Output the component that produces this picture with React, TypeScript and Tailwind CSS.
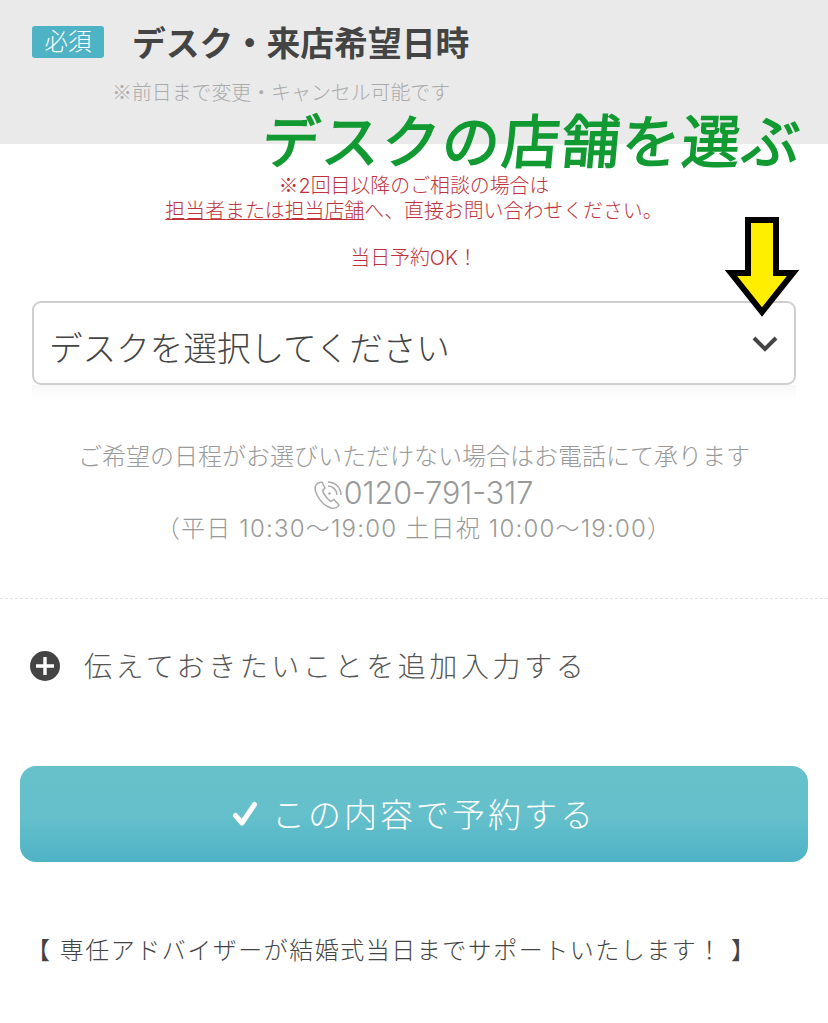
import React from "react";

const JP = 'Inter, "Noto Sans CJK JP", "Noto Sans", sans-serif';
const CJK = '"Noto Sans CJK JP", "Noto Sans", sans-serif';

export default function App() {
  return (
    <div className="relative w-[828px] h-[1023px] overflow-hidden bg-white" style={{ fontFamily: JP }}>
      {/* header */}
      <div className="h-[144px] bg-[#eaeaea] pl-[32px] pt-[26px]">
        <div className="flex items-center h-[32px]">
          <span className="flex items-center justify-center w-[72px] h-[32px] rounded-[3px] bg-[#4fb3c6] text-white text-[23.5px] font-light leading-none">必須</span>
          <span className="ml-[28px] pt-[3px] text-[33.8px] font-bold text-[#444] leading-none whitespace-nowrap">デスク・来店希望日時</span>
        </div>
        <p className="ml-[80px] mt-[21px] text-[19.9px] font-light leading-[26px] text-[#aaa] whitespace-nowrap" style={{ fontFamily: CJK }}>※前日まで変更・キャンセル可能です</p>
      </div>

      {/* notice */}
      <div className="mt-[28px] text-center text-[#c0323c] text-[19.9px] font-light leading-[25px]">
        <p><span style={{ fontFamily: CJK }}>※</span>2回目以降のご相談の場合は</p>
        <p>
          <span className="underline">担当者または担当店舗</span>へ、直接お問い合わせください。
        </p>
        <p className="mt-[22px]">当日予約OK！</p>
      </div>

      {/* select */}
      <div className="mx-[32px] mt-[30px] h-[84px] rounded-[9px] border-2 border-[#cfcfcf] bg-white flex items-center justify-between pl-[15px] pr-[16px]">
        <span className="text-[33.6px] font-light leading-none text-[#444] whitespace-nowrap pt-[11px]">デスクを選択してください</span>
        <svg width="26" height="18" viewBox="0 0 26 18" fill="none" stroke="#444" strokeWidth="4" className="mt-[2px]">
          <path d="M2 3 L13 14 L24 3" />
        </svg>
      </div>
      <div className="mx-[32px] h-[18px] bg-gradient-to-b from-[#f8f8f8] to-white" />

      {/* phone */}
      <div className="mt-[38px] text-center text-[#999] font-light">
        <p className="text-[24px] leading-[32px] whitespace-nowrap">ご希望の日程がお選びいただけない場合はお電話にて承ります</p>
        <p className="mt-[3px] flex items-center justify-center h-[34px] pl-[18px]">
          <svg width="30" height="30" viewBox="0 0 30 30" fill="none" stroke="#aaa" strokeWidth="1.5" className="mr-[1px] mt-[4px]">
            <path d="M5 3 C2 5 1 9 4 15 C7 21 12 26 18 28 C22 29 25 27 26 25 L21 19.5 L18 21.5 C15 20 10.5 14 9.5 10.5 L12 8 L9 2 Z" />
            <path d="M15 6 a9 9 0 0 1 9 9 M15 2 a13 13 0 0 1 13 13" />
            <circle cx="16.5" cy="13.5" r="1.2" fill="#aaa" stroke="none" />
          </svg>
          <span className="text-[30.5px] leading-none">0120-791-317</span>
        </p>
        <p className="mt-[3px] text-[24px] leading-[32px] tracking-[1.2px] whitespace-nowrap">（平日 10:30～19:00 土日祝 10:00～19:00）</p>
      </div>

      <div className="mt-[53px] border-t border-dashed border-[#e2e2e2]" />

      {/* add row */}
      <div className="mt-[50px] flex items-center h-[34px] pl-[30px]">
        <svg width="30" height="30" viewBox="0 0 30 30">
          <circle cx="15" cy="15" r="15" fill="#444" />
          <path d="M15 6 V24 M6 15 H24" stroke="#fff" strokeWidth="3.4" />
        </svg>
        <span className="ml-[24px] text-[28px] font-light leading-none tracking-[3.6px] text-[#555] whitespace-nowrap pt-[2px]">伝えておきたいことを追加入力する</span>
      </div>

      {/* button */}
      <div className="mx-[20px] mt-[83px] h-[96px] rounded-[16px] bg-gradient-to-b from-[#66c1cb] via-[#65c0cb] to-[#4fb3c6] flex items-center justify-center text-white">
        <svg width="26" height="26" viewBox="0 0 26 26" fill="none" stroke="#fff" strokeWidth="5" strokeLinecap="round" strokeLinejoin="round">
          <path d="M3.5 14.5 L10 22 L22.5 3.5" />
        </svg>
        <span className="ml-[14px] text-[33px] font-light leading-none tracking-[3px] whitespace-nowrap pt-[2px]">この内容で予約する</span>
      </div>

      {/* footer */}
      <p className="mt-[73px] pl-[26px] text-[24px] font-light leading-[32px] tracking-[1.5px] text-[#444] whitespace-nowrap">【 専任アドバイザーが結婚式当日までサポートいたします！ 】</p>

      {/* overlays */}
      <div className="absolute left-[262px] top-[108px] text-[58px] leading-[68px] text-[#129a32] whitespace-nowrap tracking-[2px] [-webkit-text-stroke:1.5px_#129a32] [transform:skewX(-5deg)]">デスクの店舗を選ぶ</div>
      <svg className="absolute left-[722px] top-[215px]" width="80" height="104" viewBox="0 0 80 104">
        <path d="M26 5 H54 V58 H71 L40 97 L9 58 H26 Z" fill="#ffee00" stroke="#000" strokeWidth="6" strokeLinejoin="miter" />
      </svg>
    </div>
  );
}
